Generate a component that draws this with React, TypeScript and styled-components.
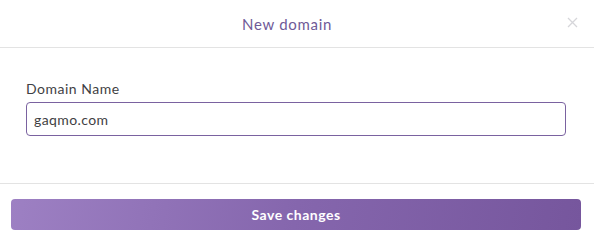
import React from "react";
import styled, { createGlobalStyle } from "styled-components";

const Global = createGlobalStyle`
  html, body { margin: 0; padding: 0; background: #fff; }
  body { font-family: Lato, "Noto Sans", sans-serif; -webkit-font-smoothing: antialiased; }
  * { box-sizing: border-box; }
`;

const Modal = styled.div`
  width: 594px;
  height: 238px;
  background: #fff;
  display: flex;
  flex-direction: column;
`;

const Header = styled.div`
  height: 48px;
  border-bottom: 1px solid #e3e3e3;
  display: flex;
  align-items: center;
  justify-content: center;
  padding-right: 20px;
  position: relative;
`;

const Title = styled.h1`
  margin: 0;
  font-size: 15px;
  font-weight: 400;
  letter-spacing: 0.7px;
  color: #6f5a98;
  line-height: 20px;
`;

const Close = styled.button`
  position: absolute;
  right: 14px;
  top: 14px;
  width: 16px;
  height: 16px;
  padding: 0;
  border: 0;
  background: transparent;
  display: flex;
  align-items: center;
  justify-content: center;
`;

const Body = styled.div`
  padding: 31px 28px 47px 26px;
  border-bottom: 1px solid #e3e3e3;
  display: flex;
  flex-direction: column;
  gap: 3px;
`;

const Label = styled.label`
  font-size: 14px;
  line-height: 20px;
  letter-spacing: 0.5px;
  color: #3f3f44;
`;

const Input = styled.input`
  height: 34px;
  width: 100%;
  border: 1px solid #7a62a0;
  border-radius: 4px;
  padding: 0 7px;
  font-family: Lato, "Noto Sans", sans-serif;
  font-size: 14px;
  letter-spacing: 0.4px;
  color: #3f3f44;
  outline: none;
  background: #fff;
`;

const Footer = styled.div`
  padding: 15px 13px 7px 11px;
  display: flex;
`;

const SaveButton = styled.button`
  flex: 1;
  height: 31px;
  border: 0;
  border-radius: 4px;
  background: linear-gradient(100deg, #9d80c3 0%, #8566ad 50%, #76569d 100%);
  color: #fff;
  font-family: Lato, "Noto Sans", sans-serif;
  font-weight: 700;
  font-size: 14px;
  letter-spacing: 0.5px;
  cursor: pointer;
`;

export default function App() {
  return (
    <>
      <Global />
      <Modal>
        <Header>
          <Title>New domain</Title>
          <Close aria-label="Close">
            <svg width="11" height="11" viewBox="0 0 11 11">
              <path d="M1 1L10 10M10 1L1 10" stroke="#d6d6da" strokeWidth="1.3" />
            </svg>
          </Close>
        </Header>
        <Body>
          <Label htmlFor="domain">Domain Name</Label>
          <Input id="domain" defaultValue="gaqmo.com" />
        </Body>
        <Footer>
          <SaveButton>Save changes</SaveButton>
        </Footer>
      </Modal>
    </>
  );
}
